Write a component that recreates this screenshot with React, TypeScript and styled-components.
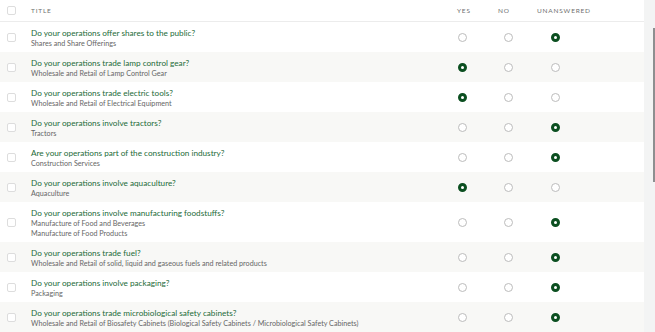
import React from "react";
import styled, { createGlobalStyle } from "styled-components";

const Global = createGlobalStyle`
  html, body { margin: 0; padding: 0; background: #ffffff; }
  body { font-family: Lato, "Open Sans", sans-serif; -webkit-font-smoothing: antialiased; }
`;

type Answer = "yes" | "no" | "unanswered";

interface Item {
  title: string;
  subs: string[];
  answer: Answer;
}

const items: Item[] = [
  { title: "Do your operations offer shares to the public?", subs: ["Shares and Share Offerings"], answer: "unanswered" },
  { title: "Do your operations trade lamp control gear?", subs: ["Wholesale and Retail of Lamp Control Gear"], answer: "yes" },
  { title: "Do your operations trade electric tools?", subs: ["Wholesale and Retail of Electrical Equipment"], answer: "yes" },
  { title: "Do your operations involve tractors?", subs: ["Tractors"], answer: "unanswered" },
  { title: "Are your operations part of the construction industry?", subs: ["Construction Services"], answer: "unanswered" },
  { title: "Do your operations involve aquaculture?", subs: ["Aquaculture"], answer: "yes" },
  { title: "Do your operations involve manufacturing foodstuffs?", subs: ["Manufacture of Food and Beverages", "Manufacture of Food Products"], answer: "unanswered" },
  { title: "Do your operations trade fuel?", subs: ["Wholesale and Retail of solid, liquid and gaseous fuels and related products"], answer: "unanswered" },
  { title: "Do your operations involve packaging?", subs: ["Packaging"], answer: "unanswered" },
  { title: "Do your operations trade microbiological safety cabinets?", subs: ["Wholesale and Retail of Biosafety Cabinets (Biological Safety Cabinets / Microbiological Safety Cabinets)"], answer: "unanswered" },
];

const Page = styled.div`
  display: flex;
  width: 655px;
  height: 332px;
  overflow: hidden;
`;

const Table = styled.div`
  width: 644px;
  flex: none;
  display: flex;
  flex-direction: column;
`;

const Rail = styled.div`
  flex: 1;
  background: #f3f4f4;
  display: flex;
  justify-content: flex-end;
  align-items: flex-start;
`;

const Thumb = styled.div`
  width: 2px;
  height: 154px;
  margin-top: 28px;
  background: #8d8f90;
`;

const HeaderRow = styled.div`
  height: 23px;
  box-sizing: border-box;
  display: grid;
  grid-template-columns: 31px 1fr 41px 39px 107px;
  align-items: center;
  border-bottom: 1px solid #ececec;
  box-shadow: 0 1px 1px rgba(0,0,0,0.03);
`;

const HeadLabel = styled.div`
  font-size: 6.5px;
  letter-spacing: 0.8px;
  color: #6f6f6f;
  text-transform: uppercase;
`;

const Row = styled.div<{ $alt: boolean }>`
  display: grid;
  grid-template-columns: 31px 1fr 46px 47px 46px 66px;
  align-items: center;
  background: ${(p) => (p.$alt ? "#f8f8f6" : "#ffffff")};
`;

const CheckCell = styled.div`
  display: flex;
  justify-content: flex-start;
  padding-left: 7px;
`;

const Check = styled.span`
  width: 9px;
  height: 9px;
  box-sizing: border-box;
  border: 1px solid #dddddd;
  border-radius: 2px;
  background: #fff;
  display: block;
`;

const TitleCell = styled.div`
  display: flex;
  flex-direction: column;
  min-width: 0;
  padding: 6px 0 3px;
`;

const Question = styled.div`
  font-size: 8.2px;
  line-height: 11px;
  color: #1d6b38;
  white-space: nowrap;
`;

const Sub = styled.div`
  font-size: 7.2px;
  line-height: 10px;
  color: #666666;
  white-space: nowrap;
`;

const RadioCell = styled.div`
  display: flex;
  justify-content: center;
`;

const Radio = styled.span<{ $on: boolean }>`
  width: 9px;
  height: 9px;
  box-sizing: border-box;
  border-radius: 50%;
  background: #fff;
  border: ${(p) => (p.$on ? "3px solid #0b4f20" : "1px solid #bcbcbc")};
  display: block;
`;

const answers: Answer[] = ["yes", "no", "unanswered"];

export default function App() {
  return (
    <>
      <Global />
      <Page>
        <Table>
          <HeaderRow>
            <CheckCell>
              <Check />
            </CheckCell>
            <HeadLabel>Title</HeadLabel>
            <HeadLabel>Yes</HeadLabel>
            <HeadLabel>No</HeadLabel>
            <HeadLabel>Unanswered</HeadLabel>
          </HeaderRow>
          {items.map((it, i) => (
            <Row key={i} $alt={i % 2 === 1}>
              <CheckCell>
                <Check />
              </CheckCell>
              <TitleCell>
                <Question>{it.title}</Question>
                {it.subs.map((s) => (
                  <Sub key={s}>{s}</Sub>
                ))}
              </TitleCell>
              {answers.map((a) => (
                <RadioCell key={a}>
                  <Radio $on={it.answer === a} />
                </RadioCell>
              ))}
              <div />
            </Row>
          ))}
        </Table>
        <Rail>
          <Thumb />
        </Rail>
      </Page>
    </>
  );
}
